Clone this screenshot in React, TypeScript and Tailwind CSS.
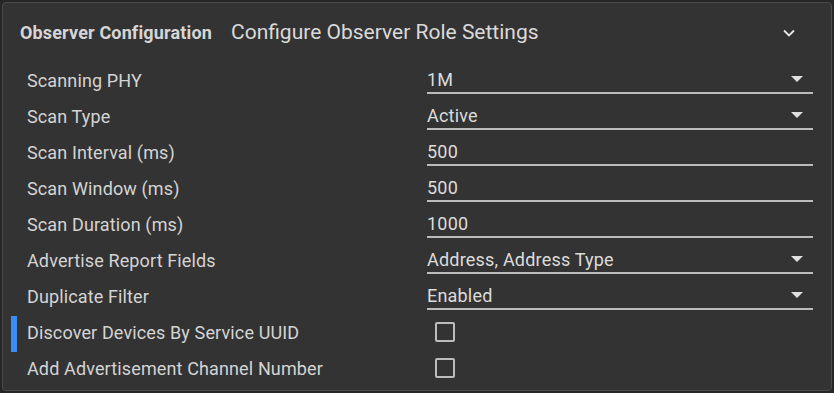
import React from "react";

type Row =
  | { label: string; kind: "select"; value: string }
  | { label: string; kind: "input"; value: string }
  | { label: string; kind: "check"; focused?: boolean };

const rows: Row[] = [
  { label: "Scanning PHY", kind: "select", value: "1M" },
  { label: "Scan Type", kind: "select", value: "Active" },
  { label: "Scan Interval (ms)", kind: "input", value: "500" },
  { label: "Scan Window (ms)", kind: "input", value: "500" },
  { label: "Scan Duration (ms)", kind: "input", value: "1000" },
  { label: "Advertise Report Fields", kind: "select", value: "Address, Address Type" },
  { label: "Duplicate Filter", kind: "select", value: "Enabled" },
  { label: "Discover Devices By Service UUID", kind: "check", focused: true },
  { label: "Add Advertisement Channel Number", kind: "check" },
];

const Field: React.FC<{ row: Row }> = ({ row }) => {
  if (row.kind === "check") {
    return (
      <div className="flex h-full items-center pl-[8px]">
        <div className="h-[20px] w-[20px] rounded-[2px] border-2 border-[#bdbdbd]" />
      </div>
    );
  }
  return (
    <div className="flex h-[31px] items-end border-b-2 border-[#bdbdbd] pb-[1px]">
      <span className="flex-1 text-[18px] leading-[22px] tracking-[0.2px] text-[#dcdcdc]">{row.value}</span>
      {row.kind === "select" && (
        <svg width="12" height="6" viewBox="0 0 12 6" className="mb-[9px] mr-[10px]">
          <path d="M0 0 L12 0 L6 6 Z" fill="#e0e0e0" />
        </svg>
      )}
    </div>
  );
};

export default function App() {
  return (
    <div className="h-[393px] w-[834px] bg-[#262626] p-[2px]" style={{ fontFamily: "Roboto, sans-serif" }}>
      <div className="h-full w-full rounded-[4px] border border-[#4a4a4a] bg-[#333333]">
        {/* header */}
        <div className="flex h-[59px] items-center pl-[17px] pr-[32px]">
          <span className="text-[18px] font-bold tracking-[0.15px] text-[#d6d6d6]">Observer Configuration</span>
          <span className="ml-[19px] flex-1 text-[21px] text-[#dadada]">Configure Observer Role Settings</span>
          <svg width="20" height="20" viewBox="0 0 24 24" fill="none" stroke="#e6e6e6" strokeWidth="2.2">
            <path d="M6 9l6 6 6-6" />
          </svg>
        </div>

        <div className="flex flex-col">
          {rows.map((row) => (
            <div key={row.label} className="relative grid h-[36px] grid-cols-[424px_386px] items-center">
              {row.kind === "check" && row.focused && (
                <div className="absolute left-[8px] top-[2px] h-[36px] w-[6px] bg-[#3b8cf5]" />
              )}
              <span className="pl-[24px] text-[18px] tracking-[0.13px] text-[#d4d4d4]">{row.label}</span>
              <div className="h-full">
                {row.kind === "check" ? (
                  <Field row={row} />
                ) : (
                  <div className="flex h-full items-end pb-[4px]">
                    <div className="w-full">
                      <Field row={row} />
                    </div>
                  </div>
                )}
              </div>
            </div>
          ))}
        </div>
      </div>
    </div>
  );
}
